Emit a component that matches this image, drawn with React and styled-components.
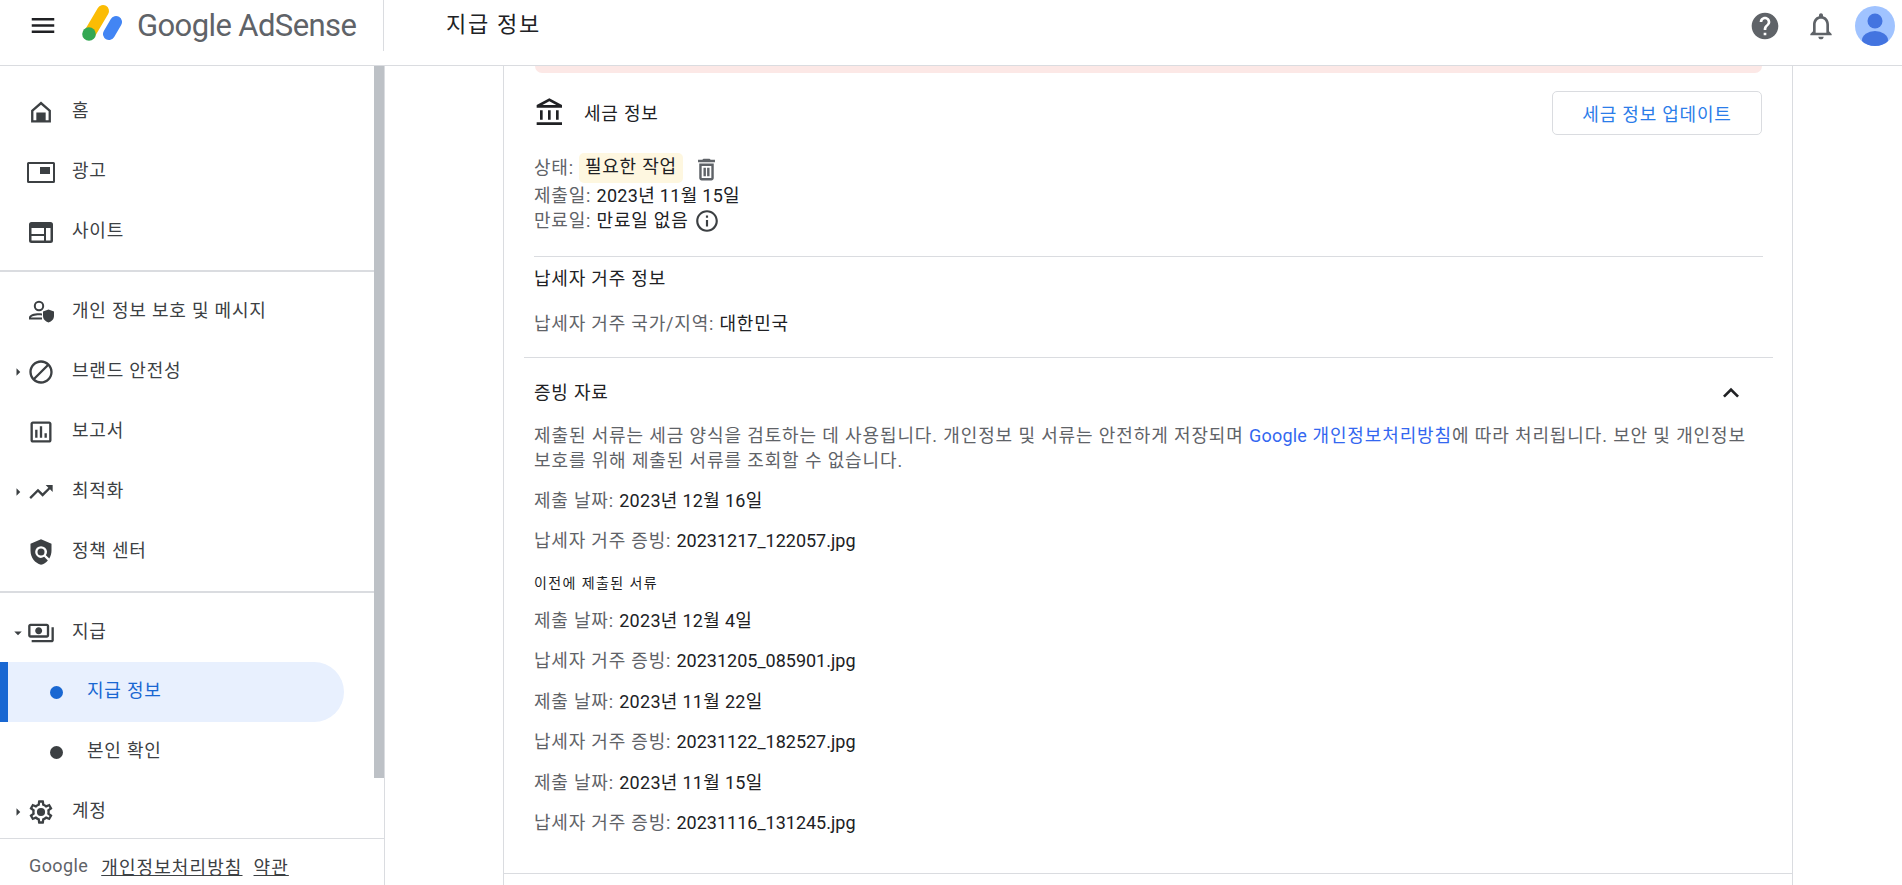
import {createGlobalStyle} from 'styled-components';
import styled from 'styled-components';
import {
  MdMenu,
  MdBlock,
  MdOutlineAssessment,
  MdTrendingUp,
  MdPolicy,
  MdOutlinePayments,
  MdOutlineAccountBalance,
  MdInfoOutline,
  MdHelp,
  MdOutlineNotifications,
  MdKeyboardArrowUp,
  MdArrowRight,
  MdArrowDropDown,
} from 'react-icons/md';

const GlobalStyle = createGlobalStyle`
  html, body {
    margin: 0;
    height: 100%;
    overflow: hidden;
    background: #fff;
  }
  body {
    font-family: Roboto, "Noto Sans CJK KR", sans-serif;
    font-size: 18px;
    letter-spacing: 0.8px;
    color: #202124;
  }
`;

const Page = styled.div`
  height: 885px;
  display: flex;
  flex-direction: column;
  overflow: hidden;
`;

const Header = styled.header`
  height: 65px;
  flex: none;
  display: flex;
  border-bottom: 1px solid #dadce0;
`;

const Brand = styled.div`
  width: 384px;
  height: 51px;
  box-sizing: border-box;
  padding-left: 28px;
  display: flex;
  align-items: flex-start;
  border-right: 1px solid #dadce0;
  color: #202124;
`;

const MenuButton = styled.div`
  width: 30px;
  height: 51px;
  display: flex;
  align-items: center;
  margin-right: 21px;
  font-size: 31px;
`;

const BrandName = styled.span`
  font-size: 31px;
  line-height: 51px;
  color: #5f6368;
  margin-left: 12px;
  letter-spacing: -0.6px;
  white-space: nowrap;
`;

const PageTitle = styled.h1`
  margin: 0 0 0 62px;
  font-size: 22px;
  font-weight: 400;
  line-height: 50px;
  letter-spacing: 1.7px;
  flex: 1;
`;

const HeaderTools = styled.div`
  display: flex;
  align-items: center;
  height: 52px;
  padding-right: 7px;
  color: #5f6368;
`;

const ToolIcon = styled.div`
  display: flex;
  margin-right: ${(props) => props.$gap}px;
`;

const Body = styled.div`
  flex: 1;
  display: flex;
  min-height: 0;
`;

const Sidebar = styled.aside`
  width: 385px;
  flex: none;
  display: flex;
  flex-direction: column;
  border-right: 1px solid #dadce0;
  box-sizing: border-box;
`;

const SideScroll = styled.div`
  height: 772px;
  flex: none;
  display: flex;
  overflow: hidden;
  border-bottom: 1px solid #dadce0;
`;

const Nav = styled.nav`
  width: 374px;
  flex: none;
  padding-top: 16px;
`;

const Thumb = styled.div`
  width: 10px;
  height: 712px;
  background: #bdc1c6;
`;

const NavGroup = styled.div`
  padding-bottom: ${(props) => props.$bottom || 0}px;
  margin-bottom: ${(props) => props.$after || 0}px;
  border-bottom: ${(props) => (props.$line ? '2px solid #dadce0' : 'none')};
`;

const NavRow = styled.div`
  height: ${(props) => props.$height || 60}px;
  display: flex;
  align-items: center;
  padding-left: 8px;
  color: #3c4043;
`;

const Caret = styled.div`
  width: 19px;
  display: flex;
  justify-content: center;
  font-size: 18px;
  color: #3c4043;
`;

const NavIcon = styled.div`
  width: 28px;
  display: flex;
  justify-content: center;
  font-size: 30px;
  color: #3c4043;
`;

const NavLabel = styled.span`
  margin-left: 17px;
  margin-bottom: 6px;
  white-space: nowrap;
`;

const SubRow = styled.div`
  width: ${(props) => (props.$active ? '344px' : 'auto')};
  height: 60px;
  box-sizing: border-box;
  display: flex;
  align-items: center;
  padding-left: 50px;
  border-left: 8px solid ${(props) => (props.$active ? '#1967d2' : 'transparent')};
  border-radius: 0 30px 30px 0;
  background: ${(props) => (props.$active ? '#e8f0fe' : 'transparent')};
  color: ${(props) => (props.$active ? '#1967d2' : '#3c4043')};
  white-space: nowrap;
`;

const Dot = styled.span`
  width: 13px;
  height: 13px;
  border-radius: 50%;
  background: currentColor;
  margin-right: 24px;
  margin-left: -8px;
`;

const SubLabel = styled.span`
  margin-bottom: 6px;
`;

const SideFooter = styled.footer`
  display: flex;
  align-items: center;
  height: 48px;
  padding: 7px 0 0 29px;
  box-sizing: border-box;
  color: #3c4043;
`;

const FooterBrand = styled.span`
  color: #5f6368;
  font-size: 18px;
  letter-spacing: 0.4px;
  margin-right: 13px;
`;

const FooterLink = styled.a`
  color: #3c4043;
  letter-spacing: 1.1px;
  text-decoration: underline;
  margin-right: 11px;
`;

const Main = styled.main`
  flex: 1;
  min-width: 0;
  padding-left: 118px;
`;

const Card = styled.div`
  width: 1290px;
  height: 819px;
  box-sizing: border-box;
  border-left: 1px solid #dadce0;
  border-right: 1px solid #dadce0;
`;

const CardContent = styled.div`
  height: 808px;
  box-sizing: border-box;
  padding: 0 19px 0 20px;
  border-bottom: 1px solid #dadce0;
`;

const Banner = styled.div`
  height: 7px;
  margin: 0 11px;
  background: #fce8e6;
  border-radius: 0 0 10px 10px;
`;

const InsetSection = styled.section`
  margin: 0 10px;
  padding: ${(props) => props.$top}px 0 ${(props) => props.$bottom}px;
  border-bottom: ${(props) => (props.$line ? '1px solid #dadce0' : 'none')};
`;

const WideSection = styled.section`
  padding: ${(props) => props.$top}px 10px 0;
  border-top: 1px solid #dadce0;
`;

const TaxHead = styled.div`
  display: flex;
  align-items: center;
  justify-content: space-between;
  height: 44px;
  margin-bottom: 17px;
  padding-right: 1px;
`;

const TaxTitle = styled.div`
  display: flex;
  align-items: center;
  gap: 18px;
  font-size: 32px;
`;

const TaxTitleText = styled.span`
  font-size: 18px;
  padding-bottom: 2px;
`;

const OutlineButton = styled.button`
  width: 210px;
  height: 44px;
  border: 1px solid #dadce0;
  border-radius: 5px;
  background: #fff;
  color: #2b7de9;
  font: inherit;
  letter-spacing: inherit;
`;

const InfoLine = styled.div`
  display: flex;
  align-items: center;
  height: ${(props) => props.$height || 25}px;
  line-height: 25px;
  color: #5f6368;
  white-space: pre;
`;

const Value = styled.span`
  color: #202124;
  letter-spacing: ${(props) => props.$spacing ?? 0.8}px;
`;

const Chip = styled.span`
  display: inline-block;
  height: 30px;
  line-height: 28px;
  padding: 0 6px;
  margin-left: 5px;
  background: #fef7e0;
  border-radius: 5px;
  color: #202124;
`;

const TrashIcon = styled.svg`
  width: 29px;
  height: 29px;
  margin-left: 9px;
  margin-top: 4px;
  color: #5f6368;
`;

const InfoIcon = styled.span`
  display: flex;
  margin-left: 5px;
  font-size: 26px;
  color: #3c4043;
`;

const SectionTitle = styled.h2`
  margin: 0;
  font-size: 18px;
  font-weight: 400;
  line-height: 24px;
  letter-spacing: inherit;
  color: #202124;
`;

const Row = styled.div`
  display: flex;
  justify-content: space-between;
  align-items: center;
`;

const Chevron = styled.span`
  display: flex;
  font-size: 32px;
  margin-right: 16px;
  height: 24px;
  align-items: center;
  color: #202124;
`;

const Paragraph = styled.p`
  margin: ${(props) => props.$top}px 0 0;
  line-height: 25px;
  word-break: keep-all;
  letter-spacing: 0.88px;
  color: #5f6368;
`;

const BlueLink = styled.a`
  color: #3367f0;
`;

const LinkBrand = styled.span`
  letter-spacing: 0.2px;
`;

const Field = styled.div`
  margin-top: ${(props) => props.$top || 16}px;
  line-height: 24px;
  color: #5f6368;
`;

const SmallHead = styled.div`
  margin-top: 21px;
  font-size: 14px;
  line-height: 18px;
  letter-spacing: 1.4px;
  color: #202124;
`;

const NAV_TOP = [
  {label: '홈', icon: <HomeIcon />},
  {label: '광고', icon: <AdsIcon />},
  {label: '사이트', icon: <SiteIcon />},
];

const NAV_MID = [
  {label: '개인 정보 보호 및 메시지', icon: <PrivacyIcon />},
  {label: '브랜드 안전성', icon: <MdBlock />, caret: true},
  {label: '보고서', icon: <MdOutlineAssessment />},
  {label: '최적화', icon: <MdTrendingUp />, caret: true},
  {label: '정책 센터', icon: <MdPolicy />},
];

const DOCS = [
  ['2023년 12월 4일', '20231205_085901.jpg'],
  ['2023년 11월 22일', '20231122_182527.jpg'],
  ['2023년 11월 15일', '20231116_131245.jpg'],
];

function HomeIcon() {
  return (
    <svg width="30" height="30" viewBox="0 0 24 24" fill="currentColor">
      <path d="M12 3 3.500 10.500V21h17V10.500L12 3zm6.500 16H16v-6.500H8V19H5.500v-7.600L12 5.700l6.500 5.700V19z" />
      <rect x="9.500" y="14" width="5" height="5.500" />
    </svg>
  );
}

function AdsIcon() {
  return (
    <svg width="28" height="21" viewBox="0 0 28 21" fill="currentColor">
      <path d="M1.500 0h25A1.500 1.500 0 0 1 28 1.500v18a1.500 1.500 0 0 1-1.500 1.500h-25A1.500 1.500 0 0 1 0 19.500v-18A1.500 1.500 0 0 1 1.500 0zM2 2v17h24V2H2z" fillRule="evenodd" />
      <rect x="13" y="5" width="10" height="7" />
    </svg>
  );
}

function SiteIcon() {
  return (
    <svg width="24" height="21" viewBox="0 0 24 21" fill="currentColor">
      <path d="M2.500 0h19A2.500 2.500 0 0 1 24 2.500v16a2.500 2.500 0 0 1-2.500 2.500h-19A2.500 2.500 0 0 1 0 18.500v-16A2.500 2.500 0 0 1 2.500 0zM2.500 6v6h12.500V6H2.500zm0 8v4.500h12.500V14H2.500zm14.500-8v12.500h4.500V6H17z" fillRule="evenodd" />
    </svg>
  );
}

function PrivacyIcon() {
  return (
    <svg width="28" height="24" viewBox="0 0 28 24" fill="currentColor">
      <circle cx="12" cy="6" r="4.200" fill="none" stroke="currentColor" strokeWidth="2" />
      <path d="M2 19.500v-2c0-2.800 5-4.300 10-4.300 1 0 2 .1 3 .2v2c-1-.1-2-.2-3-.2-4 0-7.700 1.100-8 2.300v.1h11v2H2z" />
      <path d="M21.500 9.500 27 11.500v4.500c0 3-2.300 5.600-5.500 6.500-3.200-.9-5.500-3.500-5.500-6.500v-4.500l5.500-2z" />
    </svg>
  );
}

function SettingsIcon() {
  return (
    <svg width="30" height="30" viewBox="0 0 24 24" fill="currentColor">
      <path d="M19.430 12.980c.04-.32.07-.64.07-.98 0-.34-.03-.66-.07-.98l2.110-1.650c.19-.15.24-.42.12-.64l-2-3.460c-.09-.16-.26-.25-.44-.25-.06 0-.12.01-.17.03l-2.490 1c-.52-.4-1.080-.73-1.690-.98l-.38-2.650C14.460 2.180 14.250 2 14 2h-4c-.25 0-.46.18-.49.42l-.38 2.650c-.61.25-1.170.59-1.690.98l-2.490-1c-.06-.02-.12-.03-.18-.03-.17 0-.34.09-.43.25l-2 3.460c-.13.22-.07.49.12.64l2.110 1.650c-.04.32-.07.65-.07.98 0 .33.03.66.07.98l-2.110 1.650c-.19.15-.24.42-.12.64l2 3.460c.09.16.26.25.44.25.06 0 .12-.01.17-.03l2.490-1c.52.4 1.080.73 1.690.98l.38 2.650c.03.24.24.42.49.42h4c.25 0 .46-.18.49-.42l.38-2.650c.61-.25 1.170-.59 1.690-.98l2.490 1c.06.02.12.03.18.03.17 0 .34-.09.43-.25l2-3.460c.12-.22.07-.49-.12-.64l-2.110-1.650zm-1.980-1.710c.04.31.05.52.05.73 0 .21-.02.43-.05.73l-.14 1.130.89.7 1.080.84-.7 1.210-1.270-.51-1.040-.42-.9.68c-.43.32-.84.56-1.250.73l-1.060.43-.16 1.130-.2 1.350h-1.400l-.19-1.350-.16-1.130-1.060-.43c-.43-.18-.83-.41-1.230-.71l-.91-.7-1.060.43-1.270.51-.7-1.210 1.080-.84.89-.7-.14-1.130c-.03-.31-.05-.54-.05-.74s.02-.43.05-.73l.14-1.130-.89-.7-1.080-.84.7-1.210 1.270.51 1.040.42.9-.68c.43-.32.84-.56 1.250-.73l1.060-.43.16-1.130.2-1.350h1.390l.19 1.350.16 1.130 1.060.43c.43.18.83.41 1.230.71l.91.7 1.060-.43 1.270-.51.7 1.210-1.070.85-.89.7.14 1.130z" />
      <circle cx="12" cy="12" r="3.500" />
    </svg>
  );
}

function LogoMark() {
  return (
    <svg width="46" height="42" viewBox="0 0 46 42">
      <line x1="24" y1="11" x2="11" y2="33" stroke="#fbbc04" strokeWidth="12" strokeLinecap="round" />
      <circle cx="10" cy="34" r="6.800" fill="#34a853" />
      <line x1="37" y1="22" x2="30" y2="34" stroke="#4285f4" strokeWidth="12" strokeLinecap="round" />
    </svg>
  );
}

function Avatar() {
  return (
    <svg width="40" height="40" viewBox="0 0 40 40">
      <defs>
        <clipPath id="avatar-clip">
          <circle cx="20" cy="20" r="20" />
        </clipPath>
      </defs>
      <g clipPath="url(#avatar-clip)">
        <rect width="40" height="40" fill="#a0c3ff" />
        <circle cx="20" cy="15" r="7.500" fill="#4374e0" />
        <ellipse cx="20" cy="34" rx="13" ry="9" fill="#4374e0" />
      </g>
    </svg>
  );
}

function Navigation() {
  return (
    <Nav>
      <NavGroup $bottom={8} $after={10} $line>
        {NAV_TOP.map((item) => (
          <NavRow key={item.label}>
            <Caret />
            <NavIcon>{item.icon}</NavIcon>
            <NavLabel>{item.label}</NavLabel>
          </NavRow>
        ))}
      </NavGroup>
      <NavGroup $bottom={9} $after={11} $line>
        {NAV_MID.map((item) => (
          <NavRow key={item.label}>
            <Caret>{item.caret && <MdArrowRight />}</Caret>
            <NavIcon>{item.icon}</NavIcon>
            <NavLabel>{item.label}</NavLabel>
          </NavRow>
        ))}
      </NavGroup>
      <NavRow $height={58}>
        <Caret>
          <MdArrowDropDown />
        </Caret>
        <NavIcon>
          <MdOutlinePayments />
        </NavIcon>
        <NavLabel>지급</NavLabel>
      </NavRow>
      <SubRow $active>
        <Dot />
        <SubLabel>지급 정보</SubLabel>
      </SubRow>
      <SubRow>
        <Dot />
        <SubLabel>본인 확인</SubLabel>
      </SubRow>
      <NavRow>
        <Caret>
          <MdArrowRight />
        </Caret>
        <NavIcon>
          <SettingsIcon />
        </NavIcon>
        <NavLabel>계정</NavLabel>
      </NavRow>
    </Nav>
  );
}

const App = () => {
  return (
    <Page>
      <GlobalStyle />
      <Header>
        <Brand>
          <MenuButton>
            <MdMenu />
          </MenuButton>
          <LogoMark />
          <BrandName>Google AdSense</BrandName>
        </Brand>
        <PageTitle>지급 정보</PageTitle>
        <HeaderTools>
          <ToolIcon $gap={24}>
            <MdHelp size={32} />
          </ToolIcon>
          <ToolIcon $gap={18}>
            <MdOutlineNotifications size={32} />
          </ToolIcon>
          <Avatar />
        </HeaderTools>
      </Header>
      <Body>
        <Sidebar>
          <SideScroll>
            <Navigation />
            <Thumb />
          </SideScroll>
          <SideFooter>
            <FooterBrand>Google</FooterBrand>
            <FooterLink>개인정보처리방침</FooterLink>
            <FooterLink>약관</FooterLink>
          </SideFooter>
        </Sidebar>
        <Main>
          <Card>
            <CardContent>
              <Banner />
              <InsetSection $top={18} $bottom={23} $line>
                <TaxHead>
                  <TaxTitle>
                    <MdOutlineAccountBalance />
                    <TaxTitleText>세금 정보</TaxTitleText>
                  </TaxTitle>
                  <OutlineButton>세금 정보 업데이트</OutlineButton>
                </TaxHead>
                <InfoLine $height={31}>
                  상태:
                  <Chip>필요한 작업</Chip>
                  <TrashIcon viewBox="0 0 24 24" fill="currentColor">
                    <path d="M6 19c0 1.100.9 2 2 2h8c1.100 0 2-.9 2-2V7H6v12zm2-10h8v10H8V9zm7.500-5-1-1h-5l-1 1H5v2h14V4h-3.500zM9.500 10.500h2v7h-2zm3 0h2v7h-2z" />
                  </TrashIcon>
                </InfoLine>
                <InfoLine>
                  제출일: <Value $spacing={0.3}>2023년 11월 15일</Value>
                </InfoLine>
                <InfoLine>
                  만료일: <Value>만료일 없음</Value>
                  <InfoIcon>
                    <MdInfoOutline />
                  </InfoIcon>
                </InfoLine>
              </InsetSection>
              <InsetSection $top={10} $bottom={21}>
                <SectionTitle>납세자 거주 정보</SectionTitle>
                <Field $top={21}>
                  납세자 거주 국가/지역: <Value>대한민국</Value>
                </Field>
              </InsetSection>
              <WideSection $top={23}>
                <Row>
                  <SectionTitle>증빙 자료</SectionTitle>
                  <Chevron>
                    <MdKeyboardArrowUp />
                  </Chevron>
                </Row>
                <Paragraph $top={18}>
                  제출된 서류는 세금 양식을 검토하는 데 사용됩니다. 개인정보 및 서류는 안전하게 저장되며{' '}
                  <BlueLink>
                    <LinkBrand>Google</LinkBrand> 개인정보처리방침
                  </BlueLink>
                  에 따라 처리됩니다. 보안 및 개인정보 보호를 위해 제출된 서류를 조회할 수 없습니다.
                </Paragraph>
                <Field $top={16}>
                  제출 날짜: <Value $spacing={0.3}>2023년 12월 16일</Value>
                </Field>
                <Field $top={16}>
                  납세자 거주 증빙: <Value $spacing={0}>20231217_122057.jpg</Value>
                </Field>
                <SmallHead>이전에 제출된 서류</SmallHead>
                {DOCS.map(([date, file]) => (
                  <div key={file}>
                    <Field $top={17}>
                      제출 날짜: <Value $spacing={0.3}>{date}</Value>
                    </Field>
                    <Field $top={16}>
                      납세자 거주 증빙: <Value $spacing={0}>{file}</Value>
                    </Field>
                  </div>
                ))}
              </WideSection>
            </CardContent>
          </Card>
        </Main>
      </Body>
    </Page>
  );
};

export default App;
